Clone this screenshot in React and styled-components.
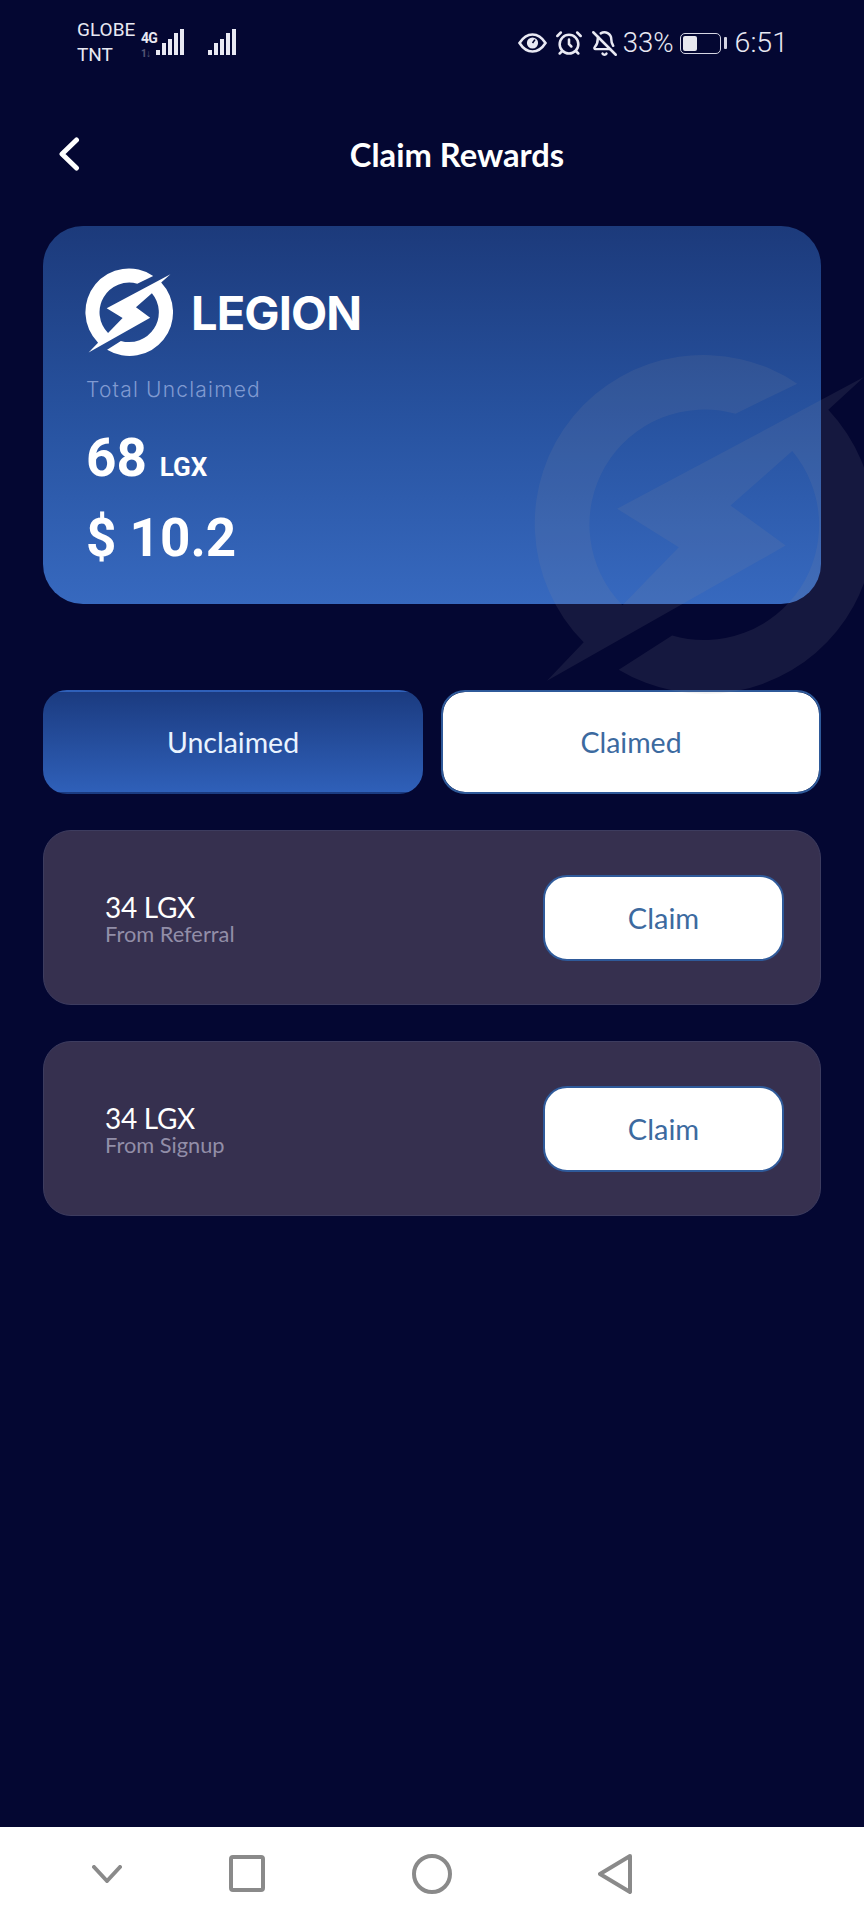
import React from 'react';
import styled, { createGlobalStyle } from 'styled-components';
import { AlarmClock, BellOff } from 'lucide-react';

const Global = createGlobalStyle`
  html, body { margin: 0; padding: 0; background: #040732; }
  * { box-sizing: border-box; }
`;

const Page = styled.div`
  position: relative;
  width: 864px;
  height: 1920px;
  overflow: hidden;
  display: flex;
  flex-direction: column;
  background: #040732;
  color: #fff;
  font-family: Lato, "Liberation Sans", sans-serif;
`;

const StatusBar = styled.div`
  height: 70px;
  padding: 17px 76px 0 77px;
  display: flex;
  align-items: flex-start;
  justify-content: space-between;
  color: #e9e9f3;
  font-family: Roboto, "Liberation Sans", sans-serif;
`;
const StatusGroup = styled.div`
  display: flex;
  align-items: center;
`;
const Carrier = styled.div`
  width: 64px;
  font-size: 19px;
  line-height: 25px;
  font-weight: 400;
`;
const NetworkTag = styled.div`
  width: 15px;
  margin-top: 6px;
  display: flex;
  flex-direction: column;
  font-size: 14px;
  line-height: 12px;
  font-weight: 700;
  letter-spacing: -0.8px;
  white-space: nowrap;
  span + span { margin-top: 6px; font-size: 10px; line-height: 8px; opacity: 0.35; }
`;
const Cluster = styled.div`
  display: flex;
  align-items: center;
  height: 36px;
  margin-top: 8px;
  color: #e9e9f3;
`;
const Percent = styled.span`
  font-size: 27.5px;
  font-weight: 300;
  line-height: 36px;
  margin: 0 6px 0 5px;
`;
const Clock = styled.span`
  font-size: 28.5px;
  font-weight: 300;
  line-height: 36px;
  margin-left: 9px;
`;
const Battery = styled.div`
  width: 41px;
  height: 21px;
  padding: 2px;
  border: 1.5px solid #d5d5e3;
  border-radius: 5px;
  position: relative;
  &::before {
    content: '';
    display: block;
    width: 14px;
    height: 100%;
    background: #e8e8ee;
    border-radius: 2px;
  }
  &::after {
    content: '';
    position: absolute;
    top: 3px;
    right: -7px;
    width: 3px;
    height: 12px;
    background: #d5d5e3;
    border-radius: 1px;
  }
`;
const Spacer = styled.span`
  display: inline-block;
  width: ${p => p.$w}px;
`;

const Header = styled.div`
  height: 52px;
  margin: 58px 30px 46px 58px;
  display: flex;
  align-items: center;
`;
const BackIcon = styled.svg`
  width: 22px;
  height: 34px;
  flex: none;
`;
const Title = styled.h1`
  flex: 1;
  margin: 0;
  text-align: center;
  font-size: 32.7px;
  font-weight: 700;
  color: #fff;
`;

const Content = styled.div`
  flex: 1;
  padding: 0 43px;
  display: flex;
  flex-direction: column;
`;
const Card = styled.div`
  height: 378px;
  padding: 43px 43px 0;
  border-radius: 40px;
  background: linear-gradient(180deg, #1c3a7b 0%, #27529f 50%, #3769bf 100%);
`;
const Brand = styled.div`
  display: flex;
  align-items: center;
  gap: 18px;
  height: 87px;
`;
const BrandName = styled.span`
  font-family: Inter, "Liberation Sans", sans-serif;
  font-size: 47px;
  font-weight: 700;
  letter-spacing: -0.9px;
  color: #fff;
`;
const CardLabel = styled.div`
  margin-top: 21px;
  font-family: Inter, "Liberation Sans", sans-serif;
  font-size: 21px;
  line-height: 26px;
  font-weight: 300;
  letter-spacing: 1.2px;
  color: #809ad1;
`;
const Amount = styled.div`
  margin-top: ${p => p.$top}px;
  display: flex;
  align-items: baseline;
  gap: 13px;
  font-family: Roboto, "Liberation Sans", sans-serif;
  font-size: 53px;
  line-height: 54px;
  font-weight: 700;
  color: #fff;
`;
const Unit = styled.span`
  font-size: 26px;
  font-weight: 700;
`;

const Watermark = styled.div`
  position: absolute;
  left: 537px;
  top: 357px;
  width: 337px;
  height: 337px;
  color: #92909a;
  opacity: 0.12;
  pointer-events: none;
`;

const Tabs = styled.div`
  position: relative;
  margin-top: 86px;
  display: grid;
  grid-template-columns: 380px 380px;
  gap: 18px;
`;
const Tab = styled.div`
  height: 104px;
  display: flex;
  align-items: center;
  justify-content: center;
  font-size: 28.5px;
  border-radius: 24px;
  color: ${p => (p.$active ? '#eaf3ff' : '#3c6a9f')};
  background: ${p => (p.$active ? 'linear-gradient(180deg, #1b3b80 0%, #2f60b9 100%)' : '#fff')};
  border: 2px solid ${p => (p.$active ? 'transparent' : '#2f5a9a')};
  background-clip: ${p => (p.$active ? 'border-box' : 'padding-box')};
`;
const Rewards = styled.div`
  margin-top: 36px;
  display: flex;
  flex-direction: column;
  gap: 36px;
`;
const Row = styled.div`
  height: 175px;
  padding: 0 36px 0 61px;
  display: flex;
  align-items: center;
  justify-content: space-between;
  background: #36304f;
  border: 1px solid #3d3c5f;
  border-radius: 28px;
`;
const RowText = styled.div`
  display: flex;
  flex-direction: column;
  margin-top: 4px;
`;
const RowAmount = styled.span`
  font-size: 28px;
  line-height: 28px;
  color: #fff;
  letter-spacing: -0.3px;
`;
const RowSource = styled.span`
  font-size: 21.8px;
  line-height: 26px;
  color: #928ea8;
`;
const ClaimButton = styled.button`
  width: 241px;
  height: 86px;
  padding: 0;
  font-family: inherit;
  font-size: 29px;
  color: #3c6a9f;
  background: #fff;
  border: 2px solid #2f5a9a;
  border-radius: 24px;
`;

const NavBar = styled.div`
  height: 93px;
  padding-left: 92px;
  display: grid;
  grid-template-columns: 137px 183px 186px 1fr;
  align-items: center;
  background: #fff;
`;
const NavIcon = styled.svg`
  display: block;
  fill: none;
  stroke: #8a8a8a;
  stroke-width: 4;
  stroke-linejoin: round;
  stroke-linecap: round;
`;

const LOGO_PATH = 'M1000 190 A505 505 0 0 0 360 965 L250 1080 L965 675 L800 555 L985 392 A345 345 0 0 1 625 945 L465 1047 A505 505 0 0 0 1093 268 L1200 170 L460 565 L645 680 L476 854 A345 345 0 0 1 815 280 Z';

const Logo = ({ size }) => (
  <svg width={size} height={size} viewBox="220 110 1010 1010" aria-hidden="true" style={{ flex: 'none', display: 'block', overflow: 'visible' }}>
    <path d={LOGO_PATH} fill="currentColor" />
  </svg>
);

const Signal = () => (
  <svg width="28" height="26" viewBox="0 0 28 26" aria-hidden="true" fill="#e9e9f3">
    <rect x="0" y="21" width="4" height="5" />
    <rect x="6" y="14" width="4" height="12" />
    <rect x="12" y="10" width="4" height="16" />
    <rect x="18" y="4" width="4" height="22" />
    <rect x="24" y="0" width="4" height="26" />
  </svg>
);

const Eye = () => (
  <svg width="29" height="20" viewBox="0 0 29 20" aria-hidden="true">
    <path d="M1.5 10 C6 3 10 1.5 14.5 1.5 S23 3 27.5 10 C23 17 19 18.5 14.5 18.5 S6 17 1.5 10 Z" fill="none" stroke="#e9e9f3" strokeWidth="2.6" />
    <circle cx="14.5" cy="10" r="5.6" fill="#e9e9f3" />
    <path d="M14.5 10 L17 6.6" stroke="#03062e" strokeWidth="1.6" />
  </svg>
);

const Reward = ({ source }) => (
  <Row>
    <RowText>
      <RowAmount>34 LGX</RowAmount>
      <RowSource>{source}</RowSource>
    </RowText>
    <ClaimButton>Claim</ClaimButton>
  </Row>
);

export default function App() {
  return (
    <Page>
      <Global />
      <StatusBar>
        <StatusGroup>
          <Carrier>GLOBE<br />TNT</Carrier>
          <NetworkTag><span>4G</span><span>1↓</span></NetworkTag>
          <Signal />
          <Spacer $w={24} />
          <Signal />
        </StatusGroup>
        <Cluster>
          <Eye />
          <Spacer $w={8} />
          <AlarmClock size={28} strokeWidth={2.2} />
          <Spacer $w={8} />
          <BellOff size={27} strokeWidth={2.2} />
          <Percent>33%</Percent>
          <Battery />
          <Spacer $w={5} />
          <Clock>6:51</Clock>
        </Cluster>
      </StatusBar>
      <Header>
        <BackIcon viewBox="0 0 22 34" aria-hidden="true">
          <path d="M18.5 3 L4 17 L18.5 31" fill="none" stroke="#fff" strokeWidth="5" strokeLinecap="round" strokeLinejoin="round" />
        </BackIcon>
        <Title>Claim Rewards</Title>
      </Header>
      <Content>
        <Card>
          <Brand>
            <Logo size={87} />
            <BrandName>LEGION</BrandName>
          </Brand>
          <CardLabel>Total Unclaimed</CardLabel>
          <Amount $top={28}>68 <Unit>LGX</Unit></Amount>
          <Amount $top={17}>$ 10.2</Amount>
        </Card>
        <Tabs>
          <Tab $active>Unclaimed</Tab>
          <Tab>Claimed</Tab>
        </Tabs>
        <Rewards>
          <Reward source="From Referral" />
          <Reward source="From Signup" />
        </Rewards>
      </Content>
      <Watermark><Logo size={337} /></Watermark>
      <NavBar>
        <NavIcon width="30" height="18" viewBox="0 0 30 18" aria-hidden="true"><path d="M2 2 L15 16 L28 2" /></NavIcon>
        <NavIcon width="36" height="37" viewBox="0 0 36 37" aria-hidden="true"><rect x="2" y="2" width="32" height="33" rx="2" /></NavIcon>
        <NavIcon width="40" height="40" viewBox="0 0 40 40" aria-hidden="true"><circle cx="20" cy="20" r="18" /></NavIcon>
        <NavIcon width="34" height="40" viewBox="0 0 34 40" aria-hidden="true"><path d="M32 2 L2 20 L32 38 Z" /></NavIcon>
      </NavBar>
    </Page>
  );
}
